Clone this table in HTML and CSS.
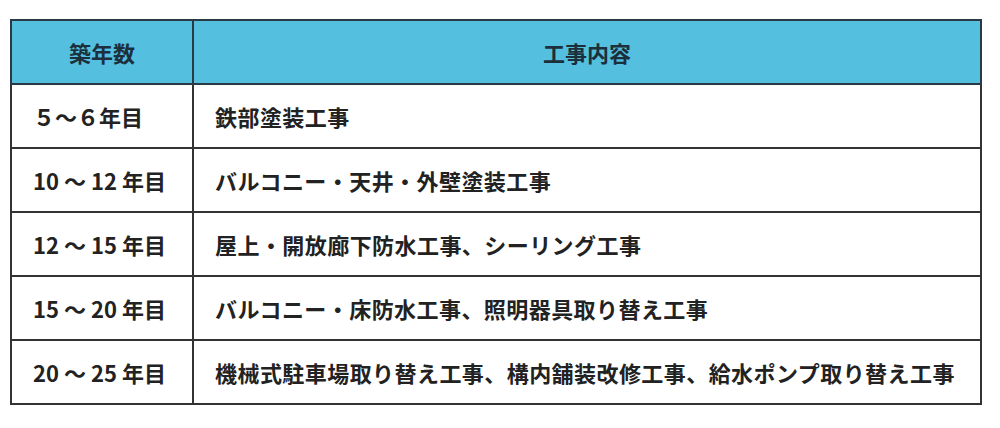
FILE: index.html
```html
<!DOCTYPE html>
<html lang="ja">
<head>
<meta charset="utf-8">
<link rel="stylesheet" href="styles.css">
</head>
<body>
<table class="schedule">
  <thead>
    <tr>
      <th class="col-year">築年数</th>
      <th class="col-work">工事内容</th>
    </tr>
  </thead>
  <tbody>
    <tr><td class="year">５～６年目</td><td class="work">鉄部塗装工事</td></tr>
    <tr><td class="year">10 ～ 12 年目</td><td class="work">バルコニー・天井・外壁塗装工事</td></tr>
    <tr><td class="year">12 ～ 15 年目</td><td class="work">屋上・開放廊下防水工事、シーリング工事</td></tr>
    <tr><td class="year">15 ～ 20 年目</td><td class="work">バルコニー・床防水工事、照明器具取り替え工事</td></tr>
    <tr><td class="year">20 ～ 25 年目</td><td class="work">機械式駐車場取り替え工事、構内舗装改修工事、給水ポンプ取り替え工事</td></tr>
  </tbody>
</table>
</body>
</html>
```
FILE: styles.css
```css
html, body {
  margin: 0;
  background: #ffffff;
}
body {
  padding: 19px 0 0 10px;
  font-family: "Noto Sans CJK JP", "Noto Sans", sans-serif;
}
.schedule {
  border-collapse: collapse;
  width: 972px;
  table-layout: fixed;
  color: #222222;
}
.schedule th,
.schedule td {
  border: 2px solid #333333;
  height: 62px;
  padding: 0;
  font-size: 22px;
  font-weight: 700;
  line-height: 1;
  vertical-align: middle;
  white-space: nowrap;
}
.schedule th {
  background: #55bfdf;
  color: #1c2f3c;
  text-align: center;
  border-color: #2a3a44;
}
.col-year {
  width: 180px;
}
.year {
  text-align: left;
  padding-left: 21px !important;
}
.work {
  text-align: left;
  padding-left: 21px !important;
  letter-spacing: 0.02em;
}
```
